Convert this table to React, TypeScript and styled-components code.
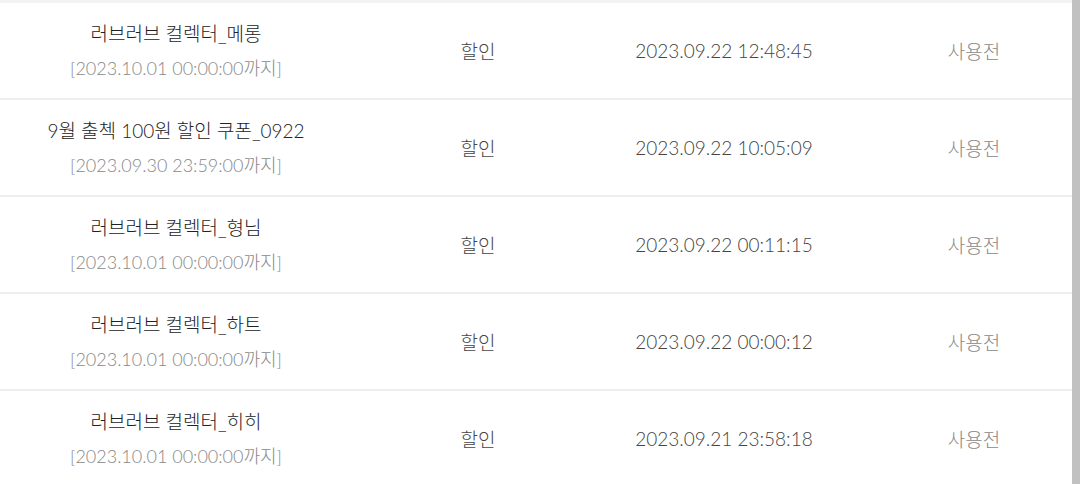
import React from "react"
import styled, { createGlobalStyle } from "styled-components"

// 쿠폰 목록 한 줄에 들어가는 데이터
interface Coupon {
  name: string
  expire: string
  kind: string
  issued: string
  status: string
}

const coupons: Coupon[] = [
  { name: "러브러브 컬렉터_메롱", expire: "2023.10.01 00:00:00", kind: "할인", issued: "2023.09.22 12:48:45", status: "사용전" },
  { name: "9월 출첵 100원 할인 쿠폰_0922", expire: "2023.09.30 23:59:00", kind: "할인", issued: "2023.09.22 10:05:09", status: "사용전" },
  { name: "러브러브 컬렉터_형님", expire: "2023.10.01 00:00:00", kind: "할인", issued: "2023.09.22 00:11:15", status: "사용전" },
  { name: "러브러브 컬렉터_하트", expire: "2023.10.01 00:00:00", kind: "할인", issued: "2023.09.22 00:00:12", status: "사용전" },
  { name: "러브러브 컬렉터_히히", expire: "2023.10.01 00:00:00", kind: "할인", issued: "2023.09.21 23:58:18", status: "사용전" },
]

const GlobalStyle = createGlobalStyle`
  html, body {
    margin: 0;
    padding: 0;
    background: #fff;
    overflow: hidden;
  }
  body {
    font-family: Lato, "Noto Sans CJK KR", sans-serif;
    font-weight: 300;
  }
`

const Page = styled.div`
  display: flex;
  width: 1080px;
  height: 484px;
  overflow: hidden;
`

const TableArea = styled.div`
  flex: 1;
  overflow: hidden;
`

// 오른쪽 스크롤바 자리
const ScrollBar = styled.div`
  width: 8px;
  background: #c1c1c1;
`

const TopEdge = styled.div`
  height: 3px;
  background: #f3f3f3;
`

const Row = styled.div`
  display: grid;
  grid-template-columns: 352px 252px 240px 260px;
  width: 1104px;
  height: 95px;
  border-bottom: 2px solid #eeeeee;
  align-items: center;
`

const Cell = styled.div<{ $color: string }>`
  text-align: center;
  font-size: 19px;
  color: ${(props) => props.$color};
`

const Title = styled.div`
  line-height: 34px;
  color: #222;
`

const Expire = styled.div`
  line-height: 34px;
  font-size: 18px;
  color: #888;
`

export default function App() {
  return (
    <>
      <GlobalStyle />
      <Page>
        <TableArea>
          <TopEdge />
          {coupons.map((c, i) => (
            <Row key={i}>
              <Cell $color="#222">
                <Title>{c.name}</Title>
                <Expire>[{c.expire}까지]</Expire>
              </Cell>
              <Cell $color="#444">{c.kind}</Cell>
              <Cell $color="#444">{c.issued}</Cell>
              <Cell $color="#888">{c.status}</Cell>
            </Row>
          ))}
        </TableArea>
        <ScrollBar />
      </Page>
    </>
  )
}
